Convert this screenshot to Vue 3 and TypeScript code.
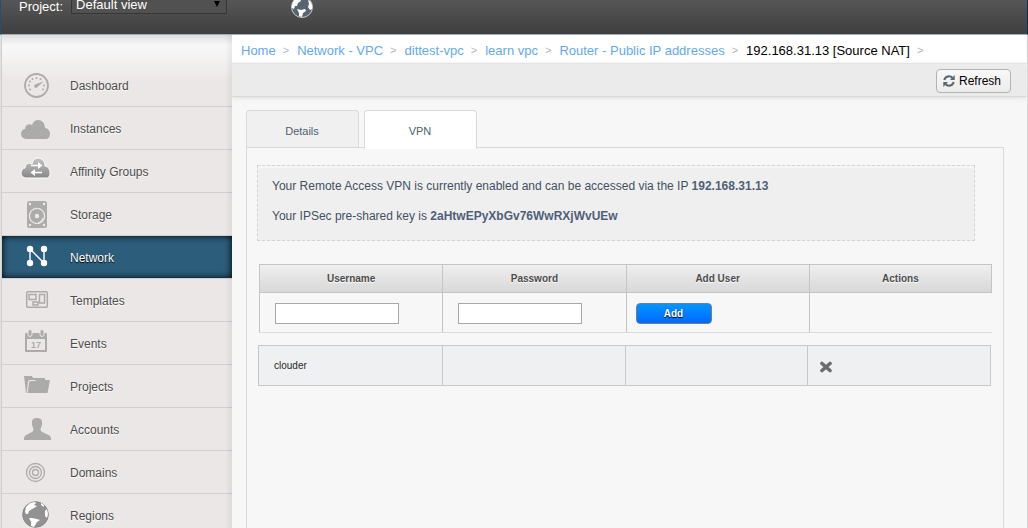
<script setup lang="ts">
import { ref } from 'vue'

interface NavItem {
  id: string
  label: string
}

interface VpnUser {
  name: string
}

const navItems: NavItem[] = [
  { id: 'dashboard', label: 'Dashboard' },
  { id: 'instances', label: 'Instances' },
  { id: 'affinity', label: 'Affinity Groups' },
  { id: 'storage', label: 'Storage' },
  { id: 'network', label: 'Network' },
  { id: 'templates', label: 'Templates' },
  { id: 'events', label: 'Events' },
  { id: 'projects', label: 'Projects' },
  { id: 'accounts', label: 'Accounts' },
  { id: 'domains', label: 'Domains' },
  { id: 'regions', label: 'Regions' },
]
const activeNav = ref<string>('network')

const crumbs: string[] = ['Home', 'Network - VPC', 'dittest-vpc', 'learn vpc', 'Router - Public IP addresses']
const currentCrumb = '192.168.31.13 [Source NAT]'

const tabs: string[] = ['Details', 'VPN']
const activeTab = ref<string>('VPN')

const project = ref<string>('Default view')
const username = ref<string>('')
const password = ref<string>('')
const users = ref<VpnUser[]>([{ name: 'clouder' }])

function addUser(): void {
  if (!username.value) return
  users.value.push({ name: username.value })
  username.value = ''
  password.value = ''
}

function removeUser(index: number): void {
  users.value.splice(index, 1)
}
</script>

<template>
  <div class="page">
    <header class="topbar">
      <label class="project-label" for="project">Project:</label>
      <div class="project-select">
        <select id="project" v-model="project">
          <option>Default view</option>
        </select>
        <svg class="arrow" width="8" height="7" viewBox="0 0 8 7" aria-hidden="true">
          <path d="M1 1h6L4 7z" fill="#000" />
        </svg>
      </div>
      <button class="globe" type="button" aria-label="Regions">
        <svg width="24" height="24" viewBox="0 0 24 24">
          <circle cx="12" cy="12" r="10.5" fill="#5a6470" stroke="#c5cbd2" />
          <path d="M2 10l2-5 5-3 3 0-2 2 1 2-3 2-1 3-2 0-1 3-2-1zM18 5l2 1 2 4v4l-2 1-2-3 1-3zM7 14l4 1 4-1 1 2-3 2-1 4-3-1 0-3z" fill="#fff" />
        </svg>
      </button>
    </header>

    <div class="body">
      <nav class="sidebar">
        <a
          v-for="item in navItems"
          :key="item.id"
          href="#"
          :class="['nav-item', { active: item.id === activeNav }]"
          @click.prevent="activeNav = item.id"
        >
          <svg class="nav-icon" width="36" height="42" viewBox="0 0 36 42" aria-hidden="true">
            <g v-if="item.id === 'dashboard'" fill="none" stroke="#adabaa">
              <circle cx="18.5" cy="21.5" r="11.5" stroke-width="1.8" />
              <g fill="#adabaa" stroke="none">
                <circle cx="11" cy="21.500" r="1" /><circle cx="12" cy="17.500" r="1" />
                <circle cx="14.500" cy="15" r="1" /><circle cx="18.500" cy="14" r="1" />
                <circle cx="22.500" cy="15" r="1" /><circle cx="26" cy="21.500" r="1" />
                <circle cx="12" cy="25.500" r="1" /><circle cx="25" cy="25.500" r="1" />
              </g>
              <path d="M17 20.500l8.500-3-6.500 6q-2 1-2.500-.5-.5-1.500.5-2.500z" fill="#adabaa" stroke="none" />
            </g>
            <path
              v-else-if="item.id === 'instances'"
              d="M8 32a5 5 0 0 1-5-5c0-3 2-5 4-5 0-4 4-6 7-4 1-3 3-5 6-5 4 0 7 3 7 8 3 0 5 3 5 6s-2 5-4 5z"
              fill="#adabaa"
            />
            <g v-else-if="item.id === 'affinity'">
              <path
                d="M8 28a5 5 0 0 1-5-5c0-3 2-5 4-5 0-4 4-6 7-4 1-4 3-6 6-6 4 0 7 3 7 8 3 0 5 3 5 7s-2 5-4 5z"
                fill="url(#cloudShade)"
                stroke="#fff"
              />
              <path d="M13 15.500h8M16 22.500h8" stroke="#fff" stroke-width="1.600" />
              <path d="M20 12l4.500 3.500L20 19zM17 19l-4.500 3.500L17 26z" fill="#fff" />
              <defs>
                <linearGradient id="cloudShade" x1="0" y1="0" x2="0" y2="1">
                  <stop offset="0" stop-color="#c4c4c4" />
                  <stop offset="1" stop-color="#888" />
                </linearGradient>
              </defs>
            </g>
            <g v-else-if="item.id === 'storage'">
              <rect x="9" y="8" width="20" height="27" rx="2.500" fill="#adabaa" />
              <g fill="none" stroke="#ebe7e6" stroke-width="1.3">
                <circle cx="19" cy="23" r="7.600" />
                <circle cx="19" cy="23" r="1.600" fill="#ebe7e6" />
                <path d="M20 30q4-1 5-5" />
              </g>
              <g fill="#ebe7e6">
                <circle cx="12" cy="11" r="1.300" /><circle cx="26" cy="11" r="1.300" />
                <circle cx="12" cy="32" r="1.300" /><circle cx="26" cy="32" r="1.300" />
              </g>
            </g>
            <g v-else-if="item.id === 'network'" fill="#fff" stroke="#fff">
              <path d="M12 27V13l14 14V13" fill="none" stroke-width="1.4" />
              <g stroke="none">
                <circle cx="12" cy="13" r="3.200" /><circle cx="26" cy="13" r="3.200" />
                <circle cx="12" cy="27" r="3.200" /><circle cx="26" cy="27" r="3.200" />
              </g>
            </g>
            <g v-else-if="item.id === 'templates'" fill="none" stroke="#adabaa" stroke-width="1.500">
              <rect x="8.700" y="12.700" width="20.600" height="15.600" rx="1" />
              <rect x="11" y="15.500" width="7" height="5" />
              <rect x="21.500" y="15.500" width="5" height="8.500" />
              <rect x="15" y="23" width="5" height="3" />
            </g>
            <g v-else-if="item.id === 'events'">
              <path d="M8 11h20a1 1 0 0 1 1 1v17a1 1 0 0 1-1 1H8a1 1 0 0 1-1-1V12a1 1 0 0 1 1-1z" fill="#adabaa" />
              <path d="M9 17h18v11H9z" fill="#ebe7e6" />
              <g fill="#adabaa" stroke="#ebe7e6" stroke-width="1">
                <rect x="10" y="7.500" width="4" height="7" rx="2" />
                <rect x="22" y="7.500" width="4" height="7" rx="2" />
              </g>
              <text x="18" y="26" text-anchor="middle" class="calendar-day">17</text>
            </g>
            <g v-else-if="item.id === 'projects'" fill="#adabaa">
              <path d="M6 11h8l1 2h12v2H12q-2 0-2 2L8.500 28 8 28z" />
              <path d="M13 16h4l1-1h14l-2.500 13H9.500l1.500-10q0-2 2-2z" />
            </g>
            <path
              v-else-if="item.id === 'accounts'"
              d="M19 10c4 0 5.500 2 5 6-.3 3-1.500 4-1.500 6 0 3 10.500 4 10.500 8v2H6v-2c0-4 9.500-5 9.500-8 0-2-1.200-3-1.500-6-.5-4 1-6 5-6z"
              fill="#adabaa"
            />
            <g v-else-if="item.id === 'domains'" fill="none" stroke="#adabaa" stroke-width="1.300">
              <circle cx="17.500" cy="21.500" r="9" />
              <circle cx="17.500" cy="21.500" r="6" />
              <circle cx="17.500" cy="21.500" r="3" />
            </g>
            <g v-else>
              <circle cx="17.500" cy="20.500" r="12.800" fill="#929292" stroke="#858585" />
              <path
                d="M7 18l1-5 4-4 5-1 1 1-2 2 3 1-3 2-2 1-3 2-1 3-2 0zM23 9l3 2 0 2-3-2zM27 17l2-2 1 5-1 4-2-2zM11 24l3 0 5 1 3 1-3 2-3 5-3-1 0-4z"
                fill="#fff"
              />
            </g>
          </svg>
          <span>{{ item.label }}</span>
        </a>
      </nav>

      <main class="content">
        <nav class="breadcrumbs" aria-label="Breadcrumb">
          <template v-for="crumb in crumbs" :key="crumb">
            <a href="#" @click.prevent>{{ crumb }}</a>
            <span class="sep">&gt;</span>
          </template>
          <span class="current">{{ currentCrumb }}</span>
          <span class="sep">&gt;</span>
        </nav>

        <div class="toolbar">
          <button class="refresh" type="button">
            <svg width="12" height="12" viewBox="0 0 12 12" aria-hidden="true">
              <g fill="none" stroke="#5c6670" stroke-width="2">
                <path d="M1.300 5A4.700 4.700 0 0 1 9.500 3" />
                <path d="M10.700 7A4.700 4.700 0 0 1 2.500 9" />
              </g>
              <path d="M11.700 0v5H7zM.3 12V7H5z" fill="#5c6670" />
            </svg>
            Refresh
          </button>
        </div>

        <div class="details">
          <div class="tabs" role="tablist">
            <button
              v-for="tab in tabs"
              :key="tab"
              type="button"
              role="tab"
              :aria-selected="tab === activeTab"
              :class="['tab', { active: tab === activeTab }]"
              @click="activeTab = tab"
            >
              {{ tab }}
            </button>
          </div>

          <section class="panel">
            <div class="notice">
              <p>Your Remote Access VPN is currently enabled and can be accessed via the IP <strong>192.168.31.13</strong></p>
              <p>Your IPSec pre-shared key is <strong>2aHtwEPyXbGv76WwRXjWvUEw</strong></p>
            </div>

            <table class="entry">
              <thead>
                <tr>
                  <th id="col-username" scope="col">Username</th>
                  <th id="col-password" scope="col">Password</th>
                  <th scope="col">Add User</th>
                  <th scope="col">Actions</th>
                </tr>
              </thead>
              <tbody>
                <tr>
                  <td><input v-model="username" type="text" aria-labelledby="col-username" /></td>
                  <td><input v-model="password" type="password" aria-labelledby="col-password" /></td>
                  <td class="add-cell"><button class="add" type="button" @click="addUser">Add</button></td>
                  <td></td>
                </tr>
              </tbody>
            </table>

            <table class="users">
              <tbody>
                <tr v-for="(user, index) in users" :key="user.name">
                  <td>{{ user.name }}</td>
                  <td></td>
                  <td></td>
                  <td class="action-cell">
                    <button class="remove" type="button" :aria-label="'Remove ' + user.name" @click="removeUser(index)">
                      <svg width="12" height="12" viewBox="0 0 12 12">
                        <path d="M2 2.500l8 7M10 2.500l-8 7" stroke="#6b6d70" stroke-width="3.600" stroke-linecap="round" />
                      </svg>
                    </button>
                  </td>
                </tr>
              </tbody>
            </table>
          </section>
        </div>
      </main>
    </div>
  </div>
</template>

<style>
body {
  margin: 0;
  background: #f7f7f7;
}
</style>

<style scoped>
.page {
  display: flex;
  flex-direction: column;
  height: 100vh;
  overflow: hidden;
  font-family: "Liberation Sans", Arial, sans-serif;
  font-size: 12px;
  color: #000;
}

.page * {
  box-sizing: border-box;
}

button,
input,
select {
  font-family: inherit;
  margin: 0;
}

.topbar {
  display: flex;
  flex: none;
  align-items: flex-end;
  height: 35px;
  padding: 0 0 15px 18px;
  border-left: 1px solid #1f5079;
  border-right: 1px solid #0d2f57;
  border-bottom: 1px solid #a3adb8;
  background: linear-gradient(#565656, #3f3f3f);
}

.project-label {
  margin: 0 8px 5px 0;
  font-size: 13px;
  line-height: 14px;
  color: #fff;
}

.project-select {
  position: relative;
  width: 156px;
  margin-bottom: 5px;
}

.project-select select {
  display: block;
  width: 100%;
  height: 20px;
  padding: 0 4px;
  appearance: none;
  border: 1px solid #363636;
  border-radius: 0;
  background: #515151;
  font-size: 13px;
  color: #fff;
}

.arrow {
  position: absolute;
  right: 6px;
  top: 6px;
}

.globe {
  margin-left: 63px;
  padding: 0;
  border: 0;
  background: none;
}

.globe svg,
.remove svg {
  display: block;
}

.body {
  display: flex;
  flex: 1;
  min-height: 0;
  padding: 0 1px;
  border-right: 1px solid #d6d6d6;
  border-left: 1px solid #e0e0e0;
}

.sidebar {
  position: relative;
  flex: none;
  width: 231px;
  padding-top: 29px;
  border-left: 1px solid #cfcfcf;
  margin-left: -1px;
  background: linear-gradient(#dedede, #f9f8f9 10px, #f7f6f6 16px, #ebe7e6 46px, #ebe7e6);
}

.sidebar::after {
  content: "";
  position: absolute;
  top: 0;
  right: 0;
  bottom: 0;
  width: 7px;
  background: linear-gradient(to right, rgba(0, 0, 0, 0), rgba(0, 0, 0, 0.06));
  pointer-events: none;
}

.nav-item {
  display: flex;
  align-items: center;
  gap: 16px;
  height: 43px;
  padding-left: 16px;
  border-bottom: 1px solid #cfcfcf;
  color: #4c4c4c;
  text-decoration: none;
  text-shadow: 0 1px 1px #fff;
}

.nav-item.active {
  background: #2c5d7b;
  background-clip: padding-box;
  box-shadow: inset 0 -1px 0 #132f45, inset 0 0 7px #000;
  color: #fff;
  text-shadow: 0 1px 1px #000;
}

.nav-item span {
  padding-top: 2px;
}

.nav-icon {
  flex: none;
}

.calendar-day {
  fill: #adabaa;
  font-size: 9px;
  font-weight: bold;
  text-shadow: none;
}

.content {
  display: flex;
  flex: 1;
  flex-direction: column;
  min-width: 0;
  background: #f7f7f7;
}

.breadcrumbs {
  display: flex;
  flex: none;
  align-items: center;
  height: 28px;
  padding: 2px 0 0 9px;
  background: #fff;
  font-size: 13px;
  white-space: nowrap;
}

.breadcrumbs a {
  color: #63a9f1;
  text-decoration: none;
}

.sep {
  margin: 0 8px 0 7px;
  font-size: 11px;
  color: #b5b5b5;
}

.toolbar {
  display: flex;
  flex: none;
  align-items: center;
  justify-content: flex-end;
  height: 34px;
  padding: 2px 15px 0 0;
  border-top: 1px solid #e2e2e2;
  border-bottom: 1px solid #d9d9d9;
  background: #ebebeb;
  box-shadow: 0 1px 4px #dcdcdc;
}

.refresh {
  display: flex;
  align-items: center;
  gap: 4px;
  height: 24px;
  padding: 0 9px 0 6px;
  border: 1px solid #b3b3b3;
  border-radius: 4px;
  background: linear-gradient(#f8f8f8, #ececec);
  font-size: 12px;
  color: #000;
}

.details {
  display: flex;
  flex: 1;
  flex-direction: column;
  padding: 13px 22px 0 14px;
}

.tabs {
  display: flex;
  align-items: flex-start;
  gap: 5px;
  height: 37px;
}

.tab {
  position: relative;
  width: 113px;
  height: 37px;
  padding: 4px 1px 0 0;
  border: 1px solid #d9d9d9;
  border-bottom: 0;
  border-radius: 4px 4px 0 0;
  background: #f0f0f0;
  font-size: 11px;
  color: #4e6070;
}

.tab.active {
  height: 39px;
  padding-bottom: 2px;
  background: #fff;
}

.panel {
  flex: 1;
  padding: 17px 11px 0 10px;
  border: 1px solid #d9d9d9;
  border-bottom: 0;
}

.notice {
  margin-right: 17px;
  padding: 12px 14px 16px;
  border: 1px dashed #d3d3d3;
  background: #efefef;
  box-shadow: inset 0 2px 1px #f7f7f7;
  line-height: 16px;
  color: #445062;
}

.notice p {
  margin: 0;
}

.notice p + p {
  margin-top: 14px;
}

.notice strong {
  color: #4f5f78;
}

table {
  table-layout: fixed;
  border-spacing: 0;
  font-size: 10px;
}

.entry {
  width: calc(100% - 2px);
  margin: 23px 0 0 2px;
}

.entry th {
  height: 29px;
  padding: 0;
  border: 1px solid #c4c4c4;
  border-right: 0;
  background: linear-gradient(#efefef, #d8d8d8);
  color: #4c4c4c;
  text-shadow: 0 1px 1px #fff;
}

.entry th:last-child {
  border-right: 1px solid #c4c4c4;
}

.entry td {
  height: 40px;
  padding: 2px 0 0 15px;
  border-left: 1px solid #c4c4c4;
  border-bottom: 1px solid #dcdcdc;
}

.entry .add-cell {
  padding-left: 9px;
}

.entry td:last-child {
  padding-left: 0;
}

.entry input {
  display: block;
  width: 124px;
  height: 21px;
  padding: 1px 4px;
  border: 1px solid #a8a8a8;
  border-radius: 0;
  background: #fff;
  font-size: 12px;
}

.add {
  display: block;
  width: 76px;
  height: 21px;
  padding: 0;
  border: 1px solid #6b7f95;
  border-radius: 4px;
  background: linear-gradient(#0095ff, #0069ff);
  font-size: 10px;
  font-weight: bold;
  color: #fff;
  text-shadow: 0 1px 1px #000;
}

.users {
  width: calc(100% - 2px);
  margin: 12px 0 0 1px;
  border: 1px solid #c8c8c8;
  background: #eff0f2;
}

.users td {
  height: 39px;
  padding: 0 0 0 14px;
  border-left: 1px solid #c8c8c8;
  color: #282828;
}

.users td:first-child {
  padding-left: 15px;
  border-left: 0;
}

.users .action-cell {
  padding: 3px 0 0 12px;
}

.remove {
  display: block;
  padding: 0;
  border: 0;
  background: none;
}
</style>
